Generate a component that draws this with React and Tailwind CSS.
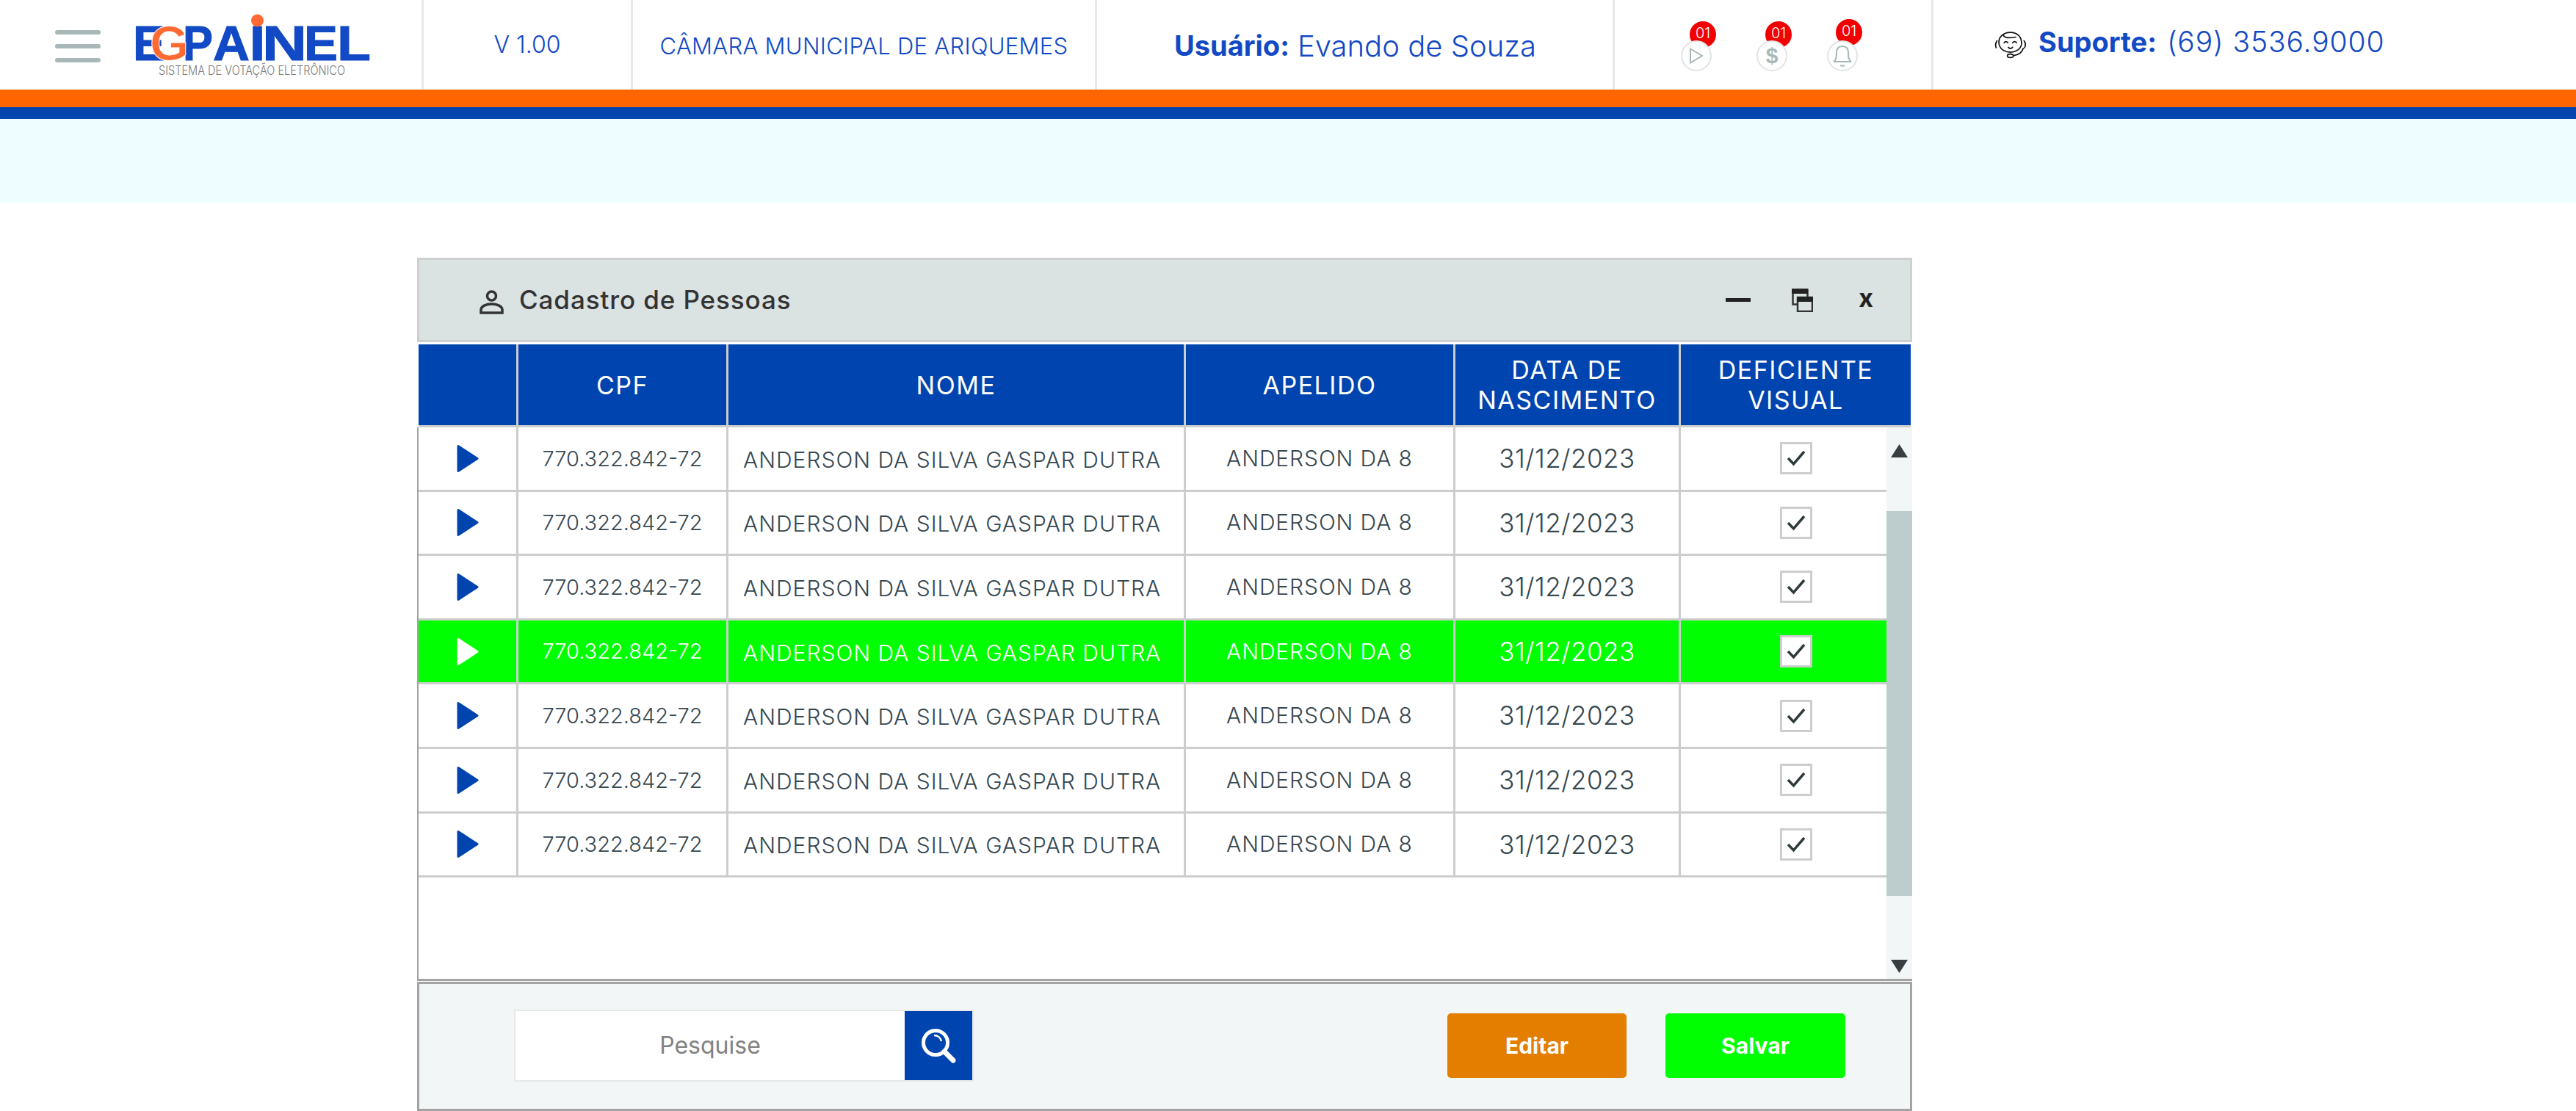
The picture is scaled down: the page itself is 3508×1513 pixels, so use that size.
import React from 'react';

const rows = [0, 1, 2, 3, 4, 5, 6];

const Logo = () => (
  <svg width="320" height="90" viewBox="0 0 320 90" className="block overflow-visible">
    <g fontFamily="Liberation Sans" fontWeight="700" fontSize="66" fill="#1249c4" stroke="#1249c4" strokeWidth="1">
      <text x="-4" y="66" textLength="44" lengthAdjust="spacingAndGlyphs">E</text>
      <text x="64" y="66" textLength="41" lengthAdjust="spacingAndGlyphs">P</text>
      <text x="105" y="66" textLength="50" lengthAdjust="spacingAndGlyphs">A</text>
      <text x="154.5" y="66" textLength="22" lengthAdjust="spacingAndGlyphs">I</text>
      <text x="172" y="66" textLength="61" lengthAdjust="spacingAndGlyphs">N</text>
      <text x="229" y="66" textLength="46" lengthAdjust="spacingAndGlyphs">E</text>
      <text x="274" y="66" textLength="46" lengthAdjust="spacingAndGlyphs">L</text>
    </g>
    <text x="19" y="66" fontFamily="Liberation Sans" fontWeight="700" fontSize="67" fill="#ff6a33" stroke="#fff" strokeWidth="1" textLength="53" lengthAdjust="spacingAndGlyphs">G</text>
    <ellipse cx="165.5" cy="12" rx="8.5" ry="8.5" fill="#ff6a33" />
    <text x="31" y="86" fontFamily="Inter" fontWeight="300" fontSize="17" fill="#777" textLength="254" lengthAdjust="spacingAndGlyphs">SISTEMA DE VOTAÇÃO ELETRÔNICO</text>
  </svg>
);

const Badge = ({ className, high, children }) => (
  <div className={`relative w-[42px] h-[42px] ${className}`}>
    <div className={`absolute left-[12px] ${high ? 'top-[-29px]' : 'top-[-26px]'} w-[36px] h-[36px] pb-[4px] rounded-full bg-[#f20000] text-white text-[20px] font-['Inter'] font-light flex items-center justify-center`}>
      01
    </div>
    <div className="absolute inset-0 rounded-full bg-white border-[2px] border-[#e2e4e4] flex items-center justify-center">
      {children}
    </div>
  </div>
);

const RowArrow = ({ active }) => (
  <svg width="30" height="39" viewBox="0 0 30 39">
    <path
      d="M2 2.5 L28 19.5 L2 36.5 Z"
      fill={active ? '#ffffff' : '#0044b0'}
      stroke={active ? '#ffffff' : '#0044b0'}
      strokeWidth="3"
      strokeLinejoin="round"
    />
  </svg>
);

const Row = ({ active }) => {
  const text = active ? 'text-white' : 'text-[#36474f]';
  return (
    <div className={`grid grid-cols-[136px_286px_623px_367px_307px_280px] h-[87.6px] border-b-[3px] border-[#cdcdcd] font-['Inter'] font-light ${text} ${active ? 'bg-[#00ff00]' : 'bg-white'}`}>
      <div className="flex items-center justify-center border-r-[3px] border-[#cdcdcd]">
        <RowArrow active={active} />
      </div>
      <div className="flex items-center justify-center border-r-[3px] border-[#cdcdcd] text-[29px]">770.322.842-72</div>
      <div className="flex items-center pl-[20px] pt-[4px] border-r-[3px] border-[#cdcdcd] text-[30px] tracking-[1px] whitespace-nowrap">ANDERSON DA SILVA GASPAR DUTRA</div>
      <div className="flex items-center justify-center border-r-[3px] border-[#cdcdcd] text-[30px] tracking-[0.9px] whitespace-nowrap">ANDERSON DA 8</div>
      <div className="flex items-center justify-center border-r-[3px] border-[#cdcdcd] text-[35px] tracking-[0.5px]">31/12/2023</div>
      <div className="flex items-center justify-center pl-[34px]">
        <div className="w-[44px] h-[44px] bg-white border-[3px] border-[#cdcdcd] flex items-center justify-center">
          <svg width="26" height="22" viewBox="0 0 26 22" fill="none" stroke="#2f3a3d" strokeWidth="3.5">
            <path d="M2 11 L9.5 19 L24 2" />
          </svg>
        </div>
      </div>
    </div>
  );
};

const HeadCell = ({ children, last }) => (
  <div className={`flex items-center justify-center text-center leading-[41px] ${last ? '' : 'border-r-[3px] border-[#cdcdcd]'}`}>
    {children}
  </div>
);

export default function App() {
  return (
    <div className="min-h-[1513px] bg-white overflow-hidden">
      {/* Header */}
      <header className="flex h-[122px] text-[#1249c4] font-['Inter']">
        <div className="w-[574px] flex items-center shrink-0">
          <div className="ml-[75px] w-[62px] flex flex-col gap-[13px] mt-[3px]">
            <div className="h-[6px] rounded-full bg-[#a8b8b8]"></div>
            <div className="h-[6px] rounded-full bg-[#a8b8b8]"></div>
            <div className="h-[6px] rounded-full bg-[#a8b8b8]"></div>
          </div>
          <div className="ml-[48px]">
            <Logo />
          </div>
        </div>
        <div className="w-[285px] border-l-[3px] border-[#e8e8e8] flex items-center justify-center text-[32px] font-light shrink-0">
          V 1.00
        </div>
        <div className="w-[632px] border-l-[3px] border-[#e8e8e8] flex items-center justify-center text-[31px] font-light tracking-[0.3px] whitespace-nowrap pt-[4px] shrink-0">
          CÂMARA MUNICIPAL DE ARIQUEMES
        </div>
        <div className="w-[705px] border-l-[3px] border-[#e8e8e8] flex items-center pl-[105px] font-light whitespace-nowrap pt-[3px] shrink-0">
          <b className="text-[38px] font-bold mr-[11px]">Usuário:</b>
          <span className="text-[40px]">Evando de Souza</span>
        </div>
        <div className="w-[434px] border-l-[3px] border-[#e8e8e8] flex items-start pt-[55px] pl-[90px] shrink-0">
          <Badge className="mr-[61px]">
            <svg width="20" height="22" viewBox="0 0 20 22" fill="none" stroke="#a8b8b8" strokeWidth="2"><path d="M2 1.5 L18 11 L2 20.5 Z" /></svg>
          </Badge>
          <Badge className="mr-[54px]">
            <span className="text-[#a8b8b8] text-[30px] font-bold font-['Liberation_Sans'] leading-none">$</span>
          </Badge>
          <Badge high>
            <svg width="28" height="30" viewBox="0 0 28 30" fill="none" stroke="#a8b8b8" strokeWidth="2"><path d="M2 23 C6 21 6 16 6 11 C6 5 9 2 14 2 C19 2 22 5 22 11 C22 16 22 21 26 23 Z" /><path d="M11 28 C12 29 16 29 17 28" /></svg>
          </Badge>
        </div>
        <div className="flex-1 border-l-[3px] border-[#e8e8e8] flex items-center pl-[83px] pb-[8px] whitespace-nowrap">
          <svg width="44" height="38" viewBox="50 40 128 112" fill="none" stroke="#111" strokeWidth="5" strokeLinecap="round" className="mr-[16px] mt-[8px]">
            <path d="M68 95 C62 65 85 46 113 46 C142 46 160 65 158 95 C152 118 130 126 113 126 C96 126 74 118 68 95 Z" />
            <path d="M85 55 C85 68 105 70 135 65" />
            <path d="M88 88 Q95 78 103 88 M122 88 Q130 78 138 88 M105 106 Q113 116 122 106" />
            <path d="M60 80 Q50 92 56 108 M168 80 Q178 92 170 108" />
            <path d="M165 110 Q158 135 125 140" />
            <ellipse cx="113" cy="140" rx="12" ry="7" />
          </svg>
          <span className="text-[38px] font-bold mr-[14px]">Suporte:</span>
          <span className="text-[39px] font-light tracking-[0.9px]">(69) 3536.9000</span>
        </div>
      </header>

      {/* Faixas */}
      <div className="h-[24px] bg-[#ff6600]"></div>
      <div className="h-[16px] bg-[#0044b0]"></div>
      <div className="h-[115px] bg-[#eefdff]"></div>

      {/* Janela */}
      <div className="ml-[568px] mt-[74px] w-[2036px]">
        <div className="h-[115px] bg-[#dae2e2] border-[3px] border-[#cfcfcf] flex items-center text-[#333] font-['Inter']">
          <svg width="33" height="33" viewBox="0 0 33 33" fill="none" stroke="#333" strokeWidth="3.5" className="ml-[82px] mr-[21px] mt-[6px]">
            <circle cx="16.5" cy="8" r="6" />
            <path d="M2 31 V27 C2 22 9 19 16.5 19 C24 19 31 22 31 27 V31 Z" />
          </svg>
          <span className="text-[35px] font-medium tracking-[0.9px]">Cadastro de Pessoas</span>
          <div className="ml-auto flex items-center">
            <div className="w-[34px] h-[5px] bg-[#222]"></div>
            <svg width="29" height="32" viewBox="0 0 29 32" fill="none" className="ml-[56px]">
              <rect x="1.5" y="1.5" width="20" height="20" stroke="#333" strokeWidth="2.5" />
              <rect x="0" y="0" width="22" height="7" fill="#222" />
              <rect x="8" y="12" width="20" height="19" fill="#dae2e2" stroke="#333" strokeWidth="2.5" />
              <rect x="7" y="11" width="22" height="7" fill="#222" />
            </svg>
            <span className="ml-[62px] mr-[50px] text-[34px] font-bold text-[#222] leading-none pb-[6px]">x</span>
          </div>
        </div>

        {/* Tabela */}
        <div className="mt-[3px] ml-[2px] mr-[2px] grid grid-cols-[136px_286px_623px_367px_307px_313px] h-[113px] bg-[#0044b0] border-b-[3px] border-[#cdcdcd] text-white text-[34px] font-['Inter'] font-normal tracking-[1.5px]">
          <HeadCell />
          <HeadCell>CPF</HeadCell>
          <HeadCell>NOME</HeadCell>
          <HeadCell>APELIDO</HeadCell>
          <HeadCell>DATA DE<br />NASCIMENTO</HeadCell>
          <HeadCell last>DEFICIENTE<br />VISUAL</HeadCell>
        </div>
        <div className="flex h-[754px] border-l-[2px] border-b-[3px] border-[#a3a3a3]">
          <div className="w-[1999px]">
            {rows.map((i) => (
              <Row key={i} active={i === 3} />
            ))}
          </div>
          <div className="w-[35px] bg-[#f2f6f7] flex flex-col items-center">
            <svg width="23" height="18" viewBox="0 0 23 18" className="mt-[23px] shrink-0"><path d="M11.5 0 L23 18 H0 Z" fill="#373f41" /></svg>
            <div className="w-full h-[524px] mt-[73px] bg-[#bdcccc] shrink-0"></div>
            <svg width="23" height="18" viewBox="0 0 23 18" className="mt-[87px] shrink-0"><path d="M0 0 H23 L11.5 18 Z" fill="#373f41" /></svg>
          </div>
        </div>

        {/* Rodape */}
        <div className="mt-[1px] h-[176px] bg-[#f2f6f7] border-[3px] border-[#a3a3a3] flex items-center font-['Inter'] pb-[2px]">
          <div className="ml-[129px] flex h-[98px] border-[2px] border-[#e8e8e8]">
            <div className="w-[530px] bg-white flex items-center justify-center text-[32px] text-[#828282]">Pesquise</div>
            <div className="w-[92px] bg-[#0044b0] flex items-center justify-center">
              <svg width="48" height="48" viewBox="0 0 48 48" fill="none" stroke="#fff">
                <circle cx="20" cy="20" r="16.5" strokeWidth="5" />
                <path d="M32 32 L44 44" strokeWidth="7" strokeLinecap="round" />
                <path d="M18 10 C23 10 27 13 28 18" strokeWidth="2.5" />
              </svg>
            </div>
          </div>
          <button className="ml-[645px] w-[244px] h-[88px] rounded-[5px] bg-[#e37e00] text-white text-[30px] font-bold">Editar</button>
          <button className="ml-[53px] w-[245px] h-[88px] rounded-[5px] bg-[#00ff00] text-white text-[30px] font-bold">Salvar</button>
        </div>
      </div>
    </div>
  );
}
